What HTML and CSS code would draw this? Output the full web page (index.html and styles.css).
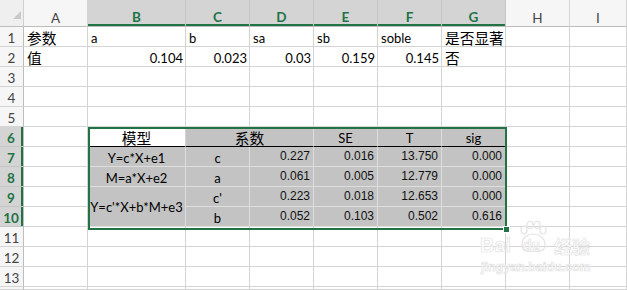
FILE: index.html
```html
<!DOCTYPE html>
<html>
<head>
<meta charset="utf-8">
<link rel="stylesheet" href="styles.css">
</head>
<body>
<div class="sheet">
  <!-- header row -->
  <div class="corner"><svg width="24" height="27" viewBox="0 0 24 27"><polygon points="21,11 21,19 13,19" fill="#c9c9c9"/></svg></div>
  <div class="ch">A</div>
  <div class="ch sel">B</div>
  <div class="ch sel">C</div>
  <div class="ch sel">D</div>
  <div class="ch sel">E</div>
  <div class="ch sel">F</div>
  <div class="ch sel">G</div>
  <div class="ch">H</div>
  <div class="ch">I</div>

  <!-- row 1 -->
  <div class="rh">1</div>
  <div class="c l cjk">参数</div>
  <div class="c l">a</div>
  <div class="c l">b</div>
  <div class="c l">sa</div>
  <div class="c l">sb</div>
  <div class="c l">soble</div>
  <div class="c l cjk">是否显著</div>
  <div class="c"></div>
  <div class="c"></div>

  <!-- row 2 -->
  <div class="rh">2</div>
  <div class="c l cjk">值</div>
  <div class="c r">0.104</div>
  <div class="c r">0.023</div>
  <div class="c r">0.03</div>
  <div class="c r">0.159</div>
  <div class="c r">0.145</div>
  <div class="c l cjk">否</div>
  <div class="c"></div>
  <div class="c"></div>

  <!-- rows 3-5 -->
  <div class="rh">3</div>
  <div class="c"></div><div class="c"></div><div class="c"></div><div class="c"></div><div class="c"></div><div class="c"></div><div class="c"></div><div class="c"></div><div class="c"></div>
  <div class="rh">4</div>
  <div class="c"></div><div class="c"></div><div class="c"></div><div class="c"></div><div class="c"></div><div class="c"></div><div class="c"></div><div class="c"></div><div class="c"></div>
  <div class="rh">5</div>
  <div class="c"></div><div class="c"></div><div class="c"></div><div class="c"></div><div class="c"></div><div class="c"></div><div class="c"></div><div class="c"></div><div class="c"></div>

  <!-- row 6 -->
  <div class="rh sel">6</div>
  <div class="c"></div>
  <div class="c ctr cjk w hb">模型</div>
  <div class="c ctr cjk g hb s2">系数</div>
  <div class="c ctr g hb">SE</div>
  <div class="c ctr g hb">T</div>
  <div class="c ctr g hb">sig</div>
  <div class="c"></div>
  <div class="c"></div>

  <!-- row 7 -->
  <div class="rh sel">7</div>
  <div class="c"></div>
  <div class="c ctr g">Y=c*X+e1</div>
  <div class="c ctr g">c</div>
  <div class="c num g">0.227</div>
  <div class="c num g">0.016</div>
  <div class="c num g">13.750</div>
  <div class="c num g">0.000</div>
  <div class="c"></div>
  <div class="c"></div>

  <!-- row 8 -->
  <div class="rh sel">8</div>
  <div class="c"></div>
  <div class="c ctr g">M=a*X+e2</div>
  <div class="c ctr g">a</div>
  <div class="c num g">0.061</div>
  <div class="c num g">0.005</div>
  <div class="c num g">12.779</div>
  <div class="c num g">0.000</div>
  <div class="c"></div>
  <div class="c"></div>

  <!-- row 9 -->
  <div class="rh sel">9</div>
  <div class="c"></div>
  <div class="c ctr g m2">Y=c'*X+b*M+e3</div>
  <div class="c ctr g">c'</div>
  <div class="c num g">0.223</div>
  <div class="c num g">0.018</div>
  <div class="c num g">12.653</div>
  <div class="c num g">0.000</div>
  <div class="c"></div>
  <div class="c"></div>

  <!-- row 10 -->
  <div class="rh sel">10</div>
  <div class="c"></div>
  <div class="c ctr g">b</div>
  <div class="c num g">0.052</div>
  <div class="c num g">0.103</div>
  <div class="c num g">0.502</div>
  <div class="c num g">0.616</div>
  <div class="c"></div>
  <div class="c"></div>

  <!-- rows 11-14 -->
  <div class="rh">11</div>
  <div class="c"></div><div class="c"></div><div class="c"></div><div class="c"></div><div class="c"></div><div class="c"></div><div class="c"></div><div class="c"></div><div class="c"></div>
  <div class="rh">12</div>
  <div class="c"></div><div class="c"></div><div class="c"></div><div class="c"></div><div class="c"></div><div class="c"></div><div class="c"></div><div class="c"></div><div class="c"></div>
  <div class="rh">13</div>
  <div class="c"></div><div class="c"></div><div class="c"></div><div class="c"></div><div class="c"></div><div class="c"></div><div class="c"></div><div class="c"></div><div class="c"></div>
  <div class="rh"></div>
  <div class="c"></div><div class="c"></div><div class="c"></div><div class="c"></div><div class="c"></div><div class="c"></div><div class="c"></div><div class="c"></div><div class="c"></div>

  <div class="selection"></div>
  <div class="handle"></div>

  <div class="wm">
    <span class="wm-bai">Bai</span>
    <svg class="wm-paw" width="30" height="32" viewBox="0 0 30 32">
      <g fill="none" stroke="#e2e2e2" stroke-width="1.2">
        <ellipse cx="6" cy="9" rx="3" ry="4"/>
        <ellipse cx="12" cy="4" rx="3" ry="3.5"/>
        <ellipse cx="19" cy="4" rx="3" ry="3.5"/>
        <ellipse cx="25" cy="9" rx="3" ry="4"/>
        <path d="M4 24 C4 16 10 13 15 13 C20 13 27 16 27 24 C27 30 22 31 15 30 C8 31 4 30 4 24 Z"/>
      </g>
    </svg>
    <span class="wm-du">du</span>
    <span class="wm-jy">经验</span>
    <span class="wm-url">jingyan.baidu.com</span>
  </div>
</div>
</body>
</html>
```

FILE: styles.css
```css
html, body {
  margin: 0;
  padding: 0;
  background: #ffffff;
  overflow: hidden;
}

.sheet {
  position: relative;
  width: 627px;
  height: 290px;
  display: grid;
  grid-template-columns: 24px 64px 98px 64px 64px 64px 64px 64px 64px 57px;
  grid-template-rows: 27px repeat(13, 20px) 3px;
  font-family: Lato, "Noto Sans", sans-serif;
  font-size: 13px;
  color: #000;
  overflow: hidden;
}

.sheet > div {
  box-sizing: border-box;
}

.corner {
  background: #efefef;
  border-right: 1px solid #cfcfcf;
  border-bottom: 1px solid #bdbdbd;
}
.corner svg { display: block; }

.ch {
  background: #f6f6f6;
  border-right: 1px solid #d4d4d4;
  border-bottom: 1px solid #bdbdbd;
  color: #444;
  display: flex;
  align-items: flex-end;
  justify-content: center;
  line-height: 16px;
  font-size: 13.5px;
}
.ch.sel {
  background: #d4d4d4;
  color: #217346;
  font-weight: 700;
  border-right-color: #c4c4c4;
  box-shadow: inset 0 -2px 0 #217346;
  padding-bottom: 1px;
}

.rh {
  background: #f6f6f6;
  border-right: 1px solid #bdbdbd;
  border-bottom: 1px solid #d4d4d4;
  color: #444;
  display: flex;
  align-items: flex-end;
  justify-content: center;
  line-height: 16px;
  font-size: 13.5px;
}
.rh.sel {
  background: #d4d4d4;
  color: #217346;
  font-weight: 700;
  border-bottom-color: #c4c4c4;
  box-shadow: inset -2px 0 0 #217346;
  padding-right: 1px;
}

.c {
  border-right: 1px solid #d4d4d4;
  border-bottom: 1px solid #d4d4d4;
  display: flex;
  align-items: flex-end;
  line-height: 16px;
  white-space: nowrap;
  overflow: hidden;
}
.l { justify-content: flex-start; padding-left: 3px; }
.r { justify-content: flex-end; padding-right: 2px; }
.ctr { justify-content: center; }

.cjk {
  font-family: "Noto Sans CJK SC", Lato, sans-serif;
  font-size: 14.7px;
  line-height: 17px;
}

.g {
  background: #c3c3c3;
  border-right-color: #dedede;
  border-bottom-color: #dedede;
}
.w { background: #ffffff; }
.hb { border-bottom-color: #000000; }
.s2 { grid-column: span 2; }
.m2 {
  grid-row: span 2;
  align-items: center;
  padding-top: 1px;
}

.num {
  font-family: "Liberation Sans", Arial, sans-serif;
  font-size: 12px;
  line-height: 15px;
  align-items: flex-start;
  justify-content: flex-end;
  padding-top: 2px;
  padding-right: 3px;
  color: #111;
}

.selection {
  position: absolute;
  left: 88px;
  top: 127px;
  width: 419px;
  height: 103px;
  border: 2px solid #217346;
  box-sizing: border-box;
  pointer-events: none;
}
.handle {
  position: absolute;
  left: 503px;
  top: 226px;
  width: 7px;
  height: 7px;
  background: #217346;
  border: 1px solid #ffffff;
  box-sizing: border-box;
}

.wm {
  position: absolute;
  left: 0;
  top: 0;
  width: 627px;
  height: 290px;
  pointer-events: none;
}
.wm span {
  position: absolute;
  color: rgba(255, 255, 255, 0.7);
  -webkit-text-stroke: 0.7px #e2e2e2;
  white-space: nowrap;
}
.wm-bai {
  left: 480px;
  top: 234px;
  font-family: "Liberation Sans", sans-serif;
  font-weight: 700;
  font-size: 20px;
}
.wm-paw {
  position: absolute;
  left: 518px;
  top: 221px;
}
.wm-du {
  left: 523px;
  top: 237px;
  font-family: "Liberation Sans", sans-serif;
  font-weight: 700;
  font-size: 14px;
}
.wm-jy {
  left: 554px;
  top: 236px;
  font-family: "Noto Sans CJK SC", sans-serif;
  font-weight: 700;
  font-size: 18px;
  line-height: 20px;
}
.wm-url {
  left: 481px;
  top: 260px;
  font-family: "Liberation Sans", sans-serif;
  font-weight: 700;
  font-size: 12.5px;
}
```
